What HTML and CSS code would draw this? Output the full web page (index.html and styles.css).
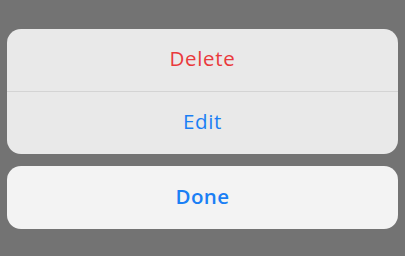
FILE: index.html
```html
<!DOCTYPE html>
<html>
<head>
<meta charset="utf-8">
<link rel="stylesheet" href="styles.css">
</head>
<body>
<div class="sheet">
  <div class="group group-actions">
    <div class="action action-destructive">Delete</div>
    <div class="divider"></div>
    <div class="action">Edit</div>
  </div>
  <div class="group group-cancel">
    <div class="action action-bold">Done</div>
  </div>
</div>
</body>
</html>
```

FILE: styles.css
```css
html, body {
  margin: 0;
  padding: 0;
  background: #737373;
  width: 405px;
  height: 256px;
  overflow: hidden;
}

.sheet {
  display: flex;
  flex-direction: column;
  gap: 12px;
  padding: 29px 7px 0 7px;
  font-family: "Open Sans", "Liberation Sans", sans-serif;
}

.group {
  border-radius: 14px;
  overflow: hidden;
  display: flex;
  flex-direction: column;
}

.group-actions {
  background: #e9e9e9;
}

.group-cancel {
  background: #f3f3f3;
}

.action {
  height: 62px;
  box-sizing: border-box;
  padding-bottom: 5px;
  display: flex;
  align-items: center;
  justify-content: center;
  font-size: 20.5px;
  letter-spacing: 0.7px;
  color: #1a7ff5;
}

.action-destructive {
  color: #e9393c;
}

.action-bold {
  height: 63px;
  padding-bottom: 3px;
  font-weight: 600;
  letter-spacing: 0.4px;
}

.divider {
  height: 1px;
  background: #d4d4d4;
}
```
